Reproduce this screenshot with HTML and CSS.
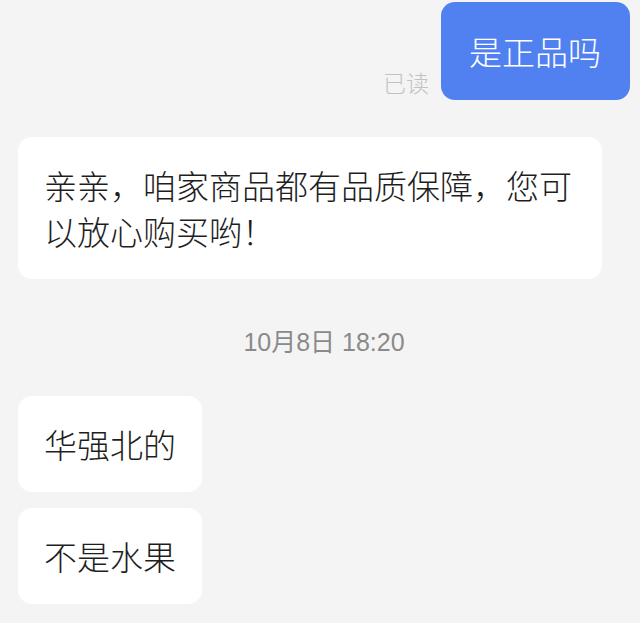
FILE: index.html
```html
<!DOCTYPE html>
<html lang="zh-CN">
<head>
<meta charset="utf-8">
<title>聊天</title>
<link rel="stylesheet" href="styles.css">
</head>
<body>
<div class="chat">
  <div class="row row-me">
    <span class="read">已读</span>
    <div class="bubble bubble-me">是正品吗</div>
  </div>
  <div class="row row-other row-gap-lg">
    <div class="bubble bubble-other">亲亲，咱家商品都有品质保障，您可以放心购买哟！</div>
  </div>
  <div class="time">10月8日 18:20</div>
  <div class="row row-other">
    <div class="bubble bubble-other">华强北的</div>
  </div>
  <div class="row row-other row-gap-sm">
    <div class="bubble bubble-other">不是水果</div>
  </div>
</div>
</body>
</html>
```
FILE: styles.css
```css
html, body {
  margin: 0;
  padding: 0;
  background: #f4f4f4;
}
body {
  font-family: "Noto Sans CJK SC", "Noto Sans", sans-serif;
  color: #222;
  overflow: hidden;
}
.chat {
  display: flex;
  flex-direction: column;
  padding: 2px 10px 0 18px;
}
.row {
  display: flex;
  align-items: flex-end;
}
.row-me {
  justify-content: flex-end;
  gap: 12px;
}
.row-other {
  justify-content: flex-start;
}
.row-gap-lg {
  margin-top: 37px;
}
.row-gap-sm {
  margin-top: 16px;
}
.bubble {
  box-sizing: border-box;
  max-width: 584px;
  padding: 25px 26px 25px 26px;
  font-size: 33px;
  font-weight: 300;
  line-height: 46px;
  border-radius: 14px;
}
.bubble-me {
  background: #5181f0;
  color: #fff;
  padding: 26px 29px 26px 28px;
}
.bubble-other {
  background: #fff;
  color: #1e1e1e;
}
.read {
  font-size: 23px;
  font-weight: 300;
  line-height: 30px;
  color: #c2c2c2;
  margin-bottom: 3px;
}
.time {
  align-self: center;
  margin: 48px 0 39px 0;
  font-family: "Liberation Sans", "Noto Sans CJK SC", sans-serif;
  font-size: 25px;
  line-height: 30px;
  color: #8a8a8a;
}
```
